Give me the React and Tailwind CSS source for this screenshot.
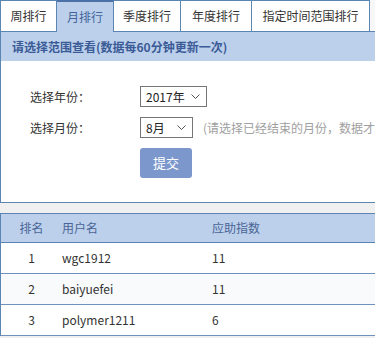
const tabs = ["周排行", "月排行", "季度排行", "年度排行", "指定时间范围排行"];
const widths = ["w-[57px]", "w-[57px]", "w-[67px]", "w-[71px]", "w-[118px]"];

const rows = [
  { rank: 1, name: "wgc1912", score: 11 },
  { rank: 2, name: "baiyuefei", score: 11 },
  { rank: 3, name: "polymer1211", score: 6 },
];

function Select({ value, width }) {
  return (
    <div
      className={`flex h-[21px] shrink-0 items-center justify-between border border-[#767676] bg-white pl-[5px] pr-[6px] text-[12px] text-[#222] ${width}`}
    >
      <span>{value}</span>
      <svg width="9" height="5" viewBox="0 0 9 5" fill="none">
        <path d="M0.5 0.5l4 4 4-4" stroke="#555" strokeWidth="1" />
      </svg>
    </div>
  );
}

export default function App() {
  return (
    <div
      className="h-[338px] w-[375px] overflow-hidden bg-[#f0f0f0]"
      style={{ fontFamily: '"Noto Sans CJK SC", "Noto Sans", sans-serif' }}
    >
      <div className="flex h-[32px] bg-white">
        {tabs.map((t, i) => (
          <div
            key={t}
            className={`flex shrink-0 items-center justify-center border-r border-[#5b85b3] text-[12px] ${widths[i]} ${
              i === 0 ? "border-l" : ""
            } ${
              i === 1
                ? "border-t-2 border-t-[#4a72a8] bg-[#bcd0ec] text-[#41649a]"
                : "border-t border-b bg-white text-[#333]"
            }`}
          >
            {t}
          </div>
        ))}
        <div className="flex-1 border-b border-[#5b85b3] bg-[#f7f7f7]" />
      </div>

      <div className="border-b border-l border-[#5b85b3] bg-white">
        <div className="flex h-[29px] items-center bg-[#bcd0ec] pl-[11px] text-[12px] font-bold text-[#3b5b96]">
          请选择范围查看(数据每60分钟更新一次)
        </div>
        <div className="flex flex-col gap-[10px] pb-[24px] pl-[29px] pt-[25px] text-[12px] text-[#333]">
          <div className="flex items-center">
            <span className="w-[110px] shrink-0">选择年份：</span>
            <Select value="2017年" width="w-[67px]" />
          </div>
          <div className="flex items-center whitespace-nowrap">
            <span className="w-[110px] shrink-0">选择月份：</span>
            <Select value="8月" width="w-[53px]" />
            <span className="ml-[10px] shrink-0 text-[#a0a0a0]">
              (请选择已经结束的月份，数据才会准确)
            </span>
          </div>
          <div className="pl-[110px]">
            <button className="h-[30px] w-[52px] rounded-[3px] bg-[#7b97cc] text-[13px] text-white">
              提交
            </button>
          </div>
        </div>
      </div>

      <div className="mt-[10px] border-l border-t border-[#5b85b3] bg-white text-[12px]">
        <div className="flex h-[29px] items-center border-b border-[#5b85b3] bg-[#bcd0ec] text-[#4a6595]">
          <span className="w-[61px] text-center">排名</span>
          <span className="w-[150px]">用户名</span>
          <span>应助指数</span>
        </div>
        {rows.map((r, i) => (
          <div
            key={r.rank}
            className={`flex h-[31px] items-center border-b border-[#6e92bc] text-[#333] ${
              i % 2 === 1 ? "bg-[#f9fafc]" : "bg-white"
            }`}
          >
            <span className="w-[61px] text-center">{r.rank}</span>
            <span className="w-[150px]">{r.name}</span>
            <span>{r.score}</span>
          </div>
        ))}
      </div>
    </div>
  );
}
